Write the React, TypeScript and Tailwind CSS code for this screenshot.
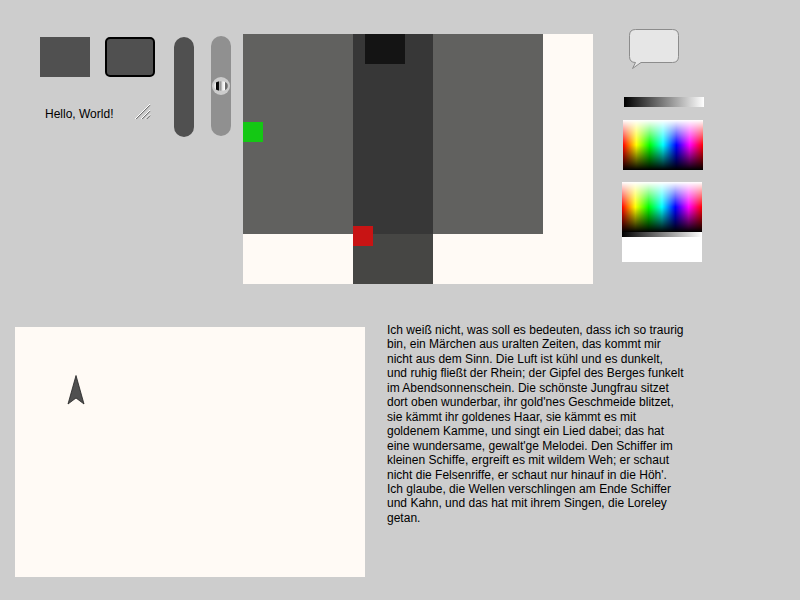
import React from "react";

const poem = [
  "Ich weiß nicht, was soll es bedeuten, dass ich so traurig",
  "bin, ein Märchen aus uralten Zeiten, das kommt mir",
  "nicht aus dem Sinn. Die Luft ist kühl und es dunkelt,",
  "und ruhig fließt der Rhein; der Gipfel des Berges funkelt",
  "im Abendsonnenschein. Die schönste Jungfrau sitzet",
  "dort oben wunderbar, ihr gold'nes Geschmeide blitzet,",
  "sie kämmt ihr goldenes Haar, sie kämmt es mit",
  "goldenem Kamme, und singt ein Lied dabei; das hat",
  "eine wundersame, gewalt'ge Melodei. Den Schiffer im",
  "kleinen Schiffe, ergreift es mit wildem Weh; er schaut",
  "nicht die Felsenriffe, er schaut nur hinauf in die Höh'.",
  "Ich glaube, die Wellen verschlingen am Ende Schiffer",
  "und Kahn, und das hat mit ihrem Singen, die Loreley",
  "getan.",
];

function Palette() {
  return (
    <div className="h-[50px] w-20 bg-[linear-gradient(to_bottom,#fff_0%,rgba(255,255,255,0)_50%,rgba(0,0,0,0)_50%,#000_100%),linear-gradient(to_right,#f00,#ff0,#0f0,#0ff,#00f,#f0f,#f00)]" />
  );
}

function ResizeHandle() {
  return (
    <svg className="-mt-px" width="16" height="16" viewBox="0 0 16 16" fill="none">
      <path d="M0 15L15 0M6 15L15 6M10.5 15L15 10.5" stroke="#fff" />
      <path d="M1.2 15L15 1.2M7.2 15L15 7.2M11.7 15L15 11.7" stroke="#606060" />
    </svg>
  );
}

function Slider() {
  return (
    <div className="mt-0.5 ml-[17px] flex h-[100px] w-5 items-center justify-center rounded-full bg-[#909090]">
      <svg width="18" height="18" viewBox="0 0 18 18">
        <defs>
          <linearGradient id="knob">
            <stop offset="0" stopColor="#ddd" />
            <stop offset=".12" stopColor="#eee" />
            <stop offset=".17" stopColor="#000" />
            <stop offset=".36" stopColor="#111" />
            <stop offset=".4" stopColor="#bbb" />
            <stop offset=".5" stopColor="#888" />
            <stop offset=".56" stopColor="#ddd" />
            <stop offset=".76" stopColor="#fff" />
            <stop offset=".82" stopColor="#555" />
            <stop offset="1" stopColor="#999" />
          </linearGradient>
        </defs>
        <circle cx="9" cy="9" r="9" fill="#ccc" />
        <ellipse cx="9" cy="9" rx="7.2" ry="4.8" fill="url(#knob)" />
      </svg>
    </div>
  );
}

function BoxFrame() {
  return (
    <div className="relative ml-3 h-[250px] w-[350px] overflow-hidden bg-[#fffaf5]">
      <div className="absolute top-0 left-0 h-[200px] w-[300px] bg-[#61615f]" />
      <div className="absolute top-0 left-[110px] h-[250px] w-20 bg-[#464644]" />
      <div className="absolute top-0 left-[110px] h-[200px] w-20 bg-[#373737]" />
      <div className="absolute top-0 left-[122px] h-[30px] w-10 bg-[#141414]" />
      <div className="absolute top-[88px] left-0 h-5 w-5 bg-[#14c814]" />
      <div className="absolute top-48 left-[110px] h-5 w-5 bg-[#c81414]" />
    </div>
  );
}

export default function App() {
  return (
    <div className="h-[600px] w-[800px] overflow-hidden bg-[#cdcdcd] font-['Liberation_Sans',Arial,sans-serif] text-xs text-black">
      <div className="flex h-[327px] items-start pt-[34px] pl-10">
        <div className="w-[115px] pt-[3px]">
          <div className="flex justify-between">
            <div className="h-10 w-[50px] bg-[#505050]" />
            <div className="h-10 w-[50px] rounded-[5px] border-2 border-black bg-[#505050]" />
          </div>
          <div className="mt-7 flex items-start justify-between pr-1 pl-[5px]">
            <span className="mt-[2px] leading-[14px] whitespace-nowrap">Hello, World!</span>
            <ResizeHandle />
          </div>
        </div>
        <div className="mt-[3px] ml-[19px] h-[100px] w-5 rounded-full bg-[#505050]" />
        <Slider />
        <BoxFrame />
        <div className="-mt-[6px] ml-[29px] flex w-[90px] flex-col items-start">
          <svg className="ml-[6px]" width="52" height="42" viewBox="0 0 52 42">
            <path
              d="M7.5 1.5H44.5Q50.5 1.5 50.5 7.5V28.5Q50.5 34.5 44.5 34.5H13L4.5 40.5L7.5 34.5Q1.5 34.5 1.5 28.5V7.5Q1.5 1.5 7.5 1.5Z"
              fill="#e6e6e6"
              stroke="#8c8c8c"
            />
          </svg>
          <div className="mt-[27px] ml-0.5 h-[10px] w-20 bg-[linear-gradient(to_right,#000,#fff)]" />
          <div className="mt-[13px] ml-px">
            <Palette />
          </div>
          <div className="mt-3 h-20 w-20 bg-white">
            <Palette />
            <div className="h-[5px] bg-[linear-gradient(to_right,#000,#fff)]" />
          </div>
        </div>
      </div>
      <div className="flex items-start pl-[15px]">
        <div className="h-[250px] w-[350px] bg-[#fffaf5] pt-[47px] pl-[52px]">
          <svg width="20" height="32" viewBox="0 0 20 32">
            <path d="M9 1.5L17 30L9 24L1 30Z" fill="#505050" stroke="#222" strokeWidth=".8" />
          </svg>
        </div>
        <div className="-mt-[4px] ml-[22px] leading-[14.46px] tracking-[0.006px] whitespace-nowrap">
          {poem.map((line) => (
            <div key={line}>{line}</div>
          ))}
        </div>
      </div>
    </div>
  );
}
